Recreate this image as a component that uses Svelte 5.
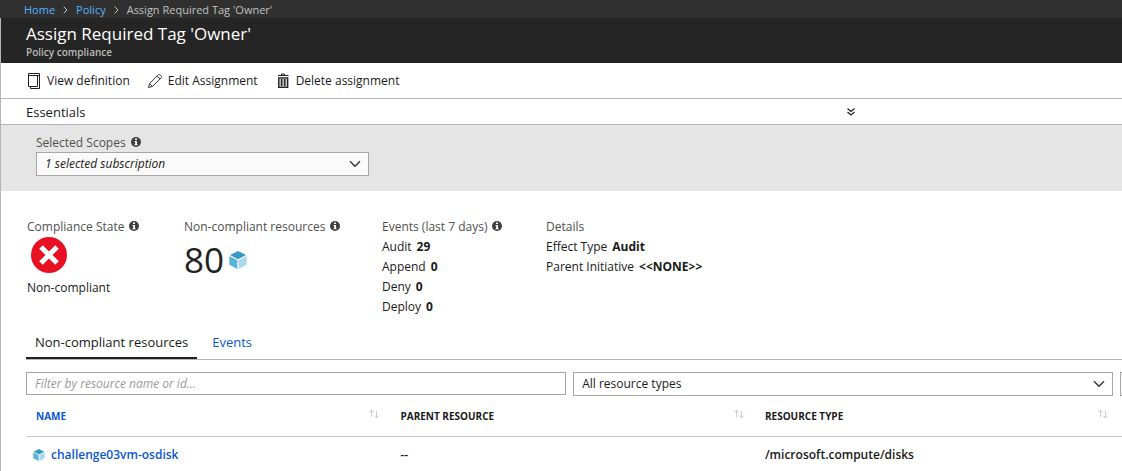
<script>
  const crumbs = ['Home', 'Policy'];
  const events = [
    { label: 'Audit', value: '29' },
    { label: 'Append', value: '0' },
    { label: 'Deny', value: '0' },
    { label: 'Deploy', value: '0' }
  ];
  const details = [
    { label: 'Effect Type', value: 'Audit' },
    { label: 'Parent Initiative', value: '<<NONE>>' }
  ];
  const columns = ['NAME', 'PARENT RESOURCE', 'RESOURCE TYPE'];
  const rows = [
    { name: 'challenge03vm-osdisk', parent: '--', type: '/microsoft.compute/disks' }
  ];
</script>

{#snippet info()}
  <svg class="info" width="10" height="10" viewBox="0 0 10 10" aria-hidden="true">
    <circle cx="5" cy="5" r="5" fill="#3f3f3f" />
    <path d="M4 1.5h2v1.5H4zM3.6 4H6v3.3h.6v1H3.5v-1H4.2V5H3.6z" fill="#fff" />
  </svg>
{/snippet}

{#snippet cube(size)}
  <svg class="cube" width={size} height={size} viewBox="0 0 18 18" aria-hidden="true">
    <path d="M9 0 17 4.1 9 8.3 1 4.1z" fill="#3999c6" />
    <path d="M.4 5 8.4 9.2V18L.4 13.8z" fill="#59b4d9" />
    <path d="M17.6 5 9.6 9.2V18l8-4.2z" fill="#a9d8ec" />
  </svg>
{/snippet}

{#snippet chevron()}
  <svg class="chevron" width="12" height="8" viewBox="0 0 12 8" aria-hidden="true">
    <path d="M1 1.2 6 6.2 11 1.2" fill="none" stroke="#333" stroke-width="1.4" />
  </svg>
{/snippet}

<nav class="crumbs" aria-label="Breadcrumb">
  {#each crumbs as crumb}
    <a href="#top">{crumb}</a>
    <svg width="5" height="8" viewBox="0 0 5 8" aria-hidden="true">
      <path d="M.7.7 4 4 .7 7.3" fill="none" stroke="#c8c8c8" />
    </svg>
  {/each}
  <span>Assign Required Tag 'Owner'</span>
</nav>

<main>
  <div class="blade">
    <header>
      <h1>Assign Required Tag 'Owner'</h1>
      <p>Policy compliance</p>
    </header>

    <div class="toolbar">
      <button>
        <svg width="16" height="16" viewBox="0 0 16 16" aria-hidden="true">
          <path d="M2.5 .5h11v15h-9v-2M2.5 .5v13h9v-11M2.5 2.5h11" fill="none" stroke="#222" />
        </svg>
        View definition
      </button>
      <button>
        <svg width="16" height="16" viewBox="0 0 16 16" aria-hidden="true">
          <path d="M1.500 14.500 2.600 10.500 11.300 1.800C12.600.5 15.500 3.300 14.200 4.700L5.500 13.400zM10 3.100l2.900 2.900M2.600 10.500l2.900 2.900" fill="none" stroke="#333" />
        </svg>
        Edit Assignment
      </button>
      <button>
        <svg width="16" height="16" viewBox="0 0 16 16" aria-hidden="true">
          <path d="M6.500 2V1h3v1M3 2.500h10.500" fill="none" stroke="#222" />
          <path d="M3.700 4.800h9v9.500h-9zM6.700 6v7M9.700 6v7" fill="#bbb" stroke="#222" stroke-width="1.300" />
        </svg>
        Delete assignment
      </button>
    </div>

    <button class="essentials" aria-expanded="false">
      <span>Essentials</span>
      <svg width="8" height="8" viewBox="0 0 8 8" aria-hidden="true">
        <path d="M.5.500 4 3.500 7.500.500M.5 4 4 7 7.500 4" fill="none" stroke="#222" stroke-width="1.200" />
      </svg>
      <span></span>
    </button>

    <section class="scopes">
      <div class="label"><label for="scope">Selected Scopes</label>{@render info()}</div>
      <div class="select scope">
        <select id="scope"><option>1 selected subscription</option></select>
        {@render chevron()}
      </div>
    </section>

    <section class="summary">
      <div>
        <h2 class="label">Compliance State {@render info()}</h2>
        <svg class="state" width="36" height="36" viewBox="0 0 36 36" aria-hidden="true">
          <circle cx="18" cy="18" r="18" fill="#e81123" />
          <path d="M10 10 26 26M26 10 10 26" stroke="#fff" stroke-width="5" />
        </svg>
        <p>Non-compliant</p>
      </div>
      <div>
        <h2 class="label">Non-compliant resources {@render info()}</h2>
        <div class="count"><span>80</span>{@render cube(18)}</div>
      </div>
      <div>
        <h2 class="label">Events (last 7 days) {@render info()}</h2>
        {#each events as item}
          <p>{item.label}<strong>{item.value}</strong></p>
        {/each}
      </div>
      <div>
        <h2 class="label">Details</h2>
        {#each details as item}
          <p>{item.label}<strong>{item.value}</strong></p>
        {/each}
      </div>
    </section>

    <section class="resources">
      <div class="tabs" role="tablist">
        <button role="tab" aria-selected="true">Non-compliant resources</button>
        <button role="tab" aria-selected="false">Events</button>
      </div>

      <div class="filters">
        <input type="text" aria-label="Filter resources" placeholder="Filter by resource name or id..." />
        <div class="select">
          <select aria-label="Resource types"><option>All resource types</option></select>
          {@render chevron()}
        </div>
        <div class="select">
          <select aria-label="Locations"></select>
          {@render chevron()}
        </div>
      </div>

      <table>
        <thead>
          <tr>
            {#each columns as column, i}
              <th class:sorted={i === 0}>
                <div>
                  {column}
                  <svg width="12" height="10" viewBox="0 0 12 10" aria-hidden="true">
                    <path d="M3.500 8V1M1 3.500 3.500 1 6 3.500M8.500 2v7M6 6.500 8.500 9 11 6.500" fill="none" stroke="#ccc" />
                  </svg>
                </div>
              </th>
            {/each}
            <th></th>
          </tr>
        </thead>
        <tbody>
          {#each rows as row}
            <tr>
              <td class="name"><a href="#top">{@render cube(12)}{row.name}</a></td>
              <td>{row.parent}</td>
              <td>{row.type}</td>
              <td></td>
            </tr>
          {/each}
        </tbody>
      </table>
    </section>
  </div>
</main>

<style>
  :global(body) {
    margin: 0;
    background: #fff;
    color: #1a1a1a;
    font: 12px/20px "Segoe UI", "Open Sans", "Noto Sans", sans-serif;
  }
  :global(#app) { overflow: hidden; }
  h1, h2, p { margin: 0; font-weight: 400; }
  a { color: #0b57d0; text-decoration: none; }
  button, input, select { font: inherit; color: inherit; box-sizing: border-box; }
  button { background: none; border: 0; padding: 0; }
  svg { flex: none; }
  strong { margin-left: 5px; font-weight: 700; }

  .crumbs {
    display: flex;
    align-items: center;
    gap: 8px;
    height: 18px;
    padding: 1px 24px 0;
    box-sizing: border-box;
    background: #303030;
    color: #c0c0c0;
    font-size: 11px;
  }
  .crumbs a { color: #55b3ff; }

  main { overflow: hidden; border-left: 1px solid #b5b5b5; }
  .blade { width: 151.6%; }

  header { padding: 4px 25px 5px; background: #252525; color: #fff; }
  h1 { font-size: 17px; line-height: 24px; }
  header p { font-size: 10px; line-height: 12px; font-weight: 600; color: #bbb; }

  .toolbar {
    display: flex;
    align-items: center;
    gap: 17px;
    height: 35px;
    padding-left: 25px;
    border-bottom: 1px solid #b5b5b5;
  }
  .toolbar button { display: flex; align-items: center; gap: 5px; }

  .essentials {
    display: grid;
    grid-template-columns: 1fr auto 1fr;
    align-items: center;
    width: 100%;
    height: 26px;
    padding: 0 25px;
    border-bottom: 1px solid #b5b5b5;
    font-size: 13px;
    text-align: left;
  }

  .scopes { padding: 9px 35px 15px; background: #e5e5e5; }
  .label {
    display: flex;
    align-items: center;
    gap: 5px;
    font-size: 12px;
    line-height: 18px;
    color: #505050;
  }
  .label .info { margin-bottom: 2px; }
  .select { position: relative; }
  .select select {
    display: block;
    width: 100%;
    height: 24px;
    padding: 0 28px 0 8px;
    border: 1px solid #a6a6a6;
    border-radius: 0;
    background: #fff;
    appearance: none;
  }
  .select .chevron { position: absolute; top: 8px; right: 8px; pointer-events: none; }
  .scope { width: 333px; }
  .scope select { background: #fafafa; font-style: italic; }

  .summary {
    display: grid;
    grid-template-columns: 157px 198px 164px 1fr;
    padding: 27px 26px 14px;
  }
  .summary .label { margin-bottom: 1px; }
  .state { display: block; margin: 0 4px 5px; }
  .count { display: flex; align-items: center; gap: 5px; font-size: 35px; line-height: 46px; color: #222; }

  .resources { padding: 0 40px 0 25px; }
  .tabs { display: flex; border-bottom: 1px solid #b5b5b5; }
  .tabs button {
    height: 28px;
    padding: 0 9px 4px;
    border-bottom: 2px solid transparent;
    font-size: 13px;
    line-height: 20px;
    color: #0b57d0;
  }
  .tabs button[aria-selected="true"] { border-bottom-color: #222; color: #1a1a1a; }
  .tabs button + button { margin-left: 6px; }

  .filters {
    display: grid;
    grid-template-columns: repeat(3, 1fr);
    align-items: start;
    gap: 7px;
    padding-top: 12px;
  }
  .filters input {
    width: 100%;
    height: 23px;
    padding: 0 8px;
    border: 1px solid #a6a6a6;
    border-radius: 0;
  }
  .filters input::placeholder { color: #999; font-style: italic; }

  table { width: 100%; border-collapse: collapse; table-layout: fixed; }
  th, td { padding: 0 10px; text-align: left; }
  th {
    width: 22.3%;
    height: 40px;
    border-bottom: 1px solid #c8c8c8;
    font-size: 10px;
    font-weight: 700;
    box-sizing: border-box;
  }
  th:last-child { width: auto; }
  th.sorted { color: #0b57d0; }
  th div { display: flex; align-items: center; justify-content: space-between; }
  th svg { margin-bottom: 4px; }
  td { height: 36px; font-weight: 600; }
  td.name { padding-left: 7px; }
  td a { display: flex; align-items: center; gap: 6px; }
</style>
